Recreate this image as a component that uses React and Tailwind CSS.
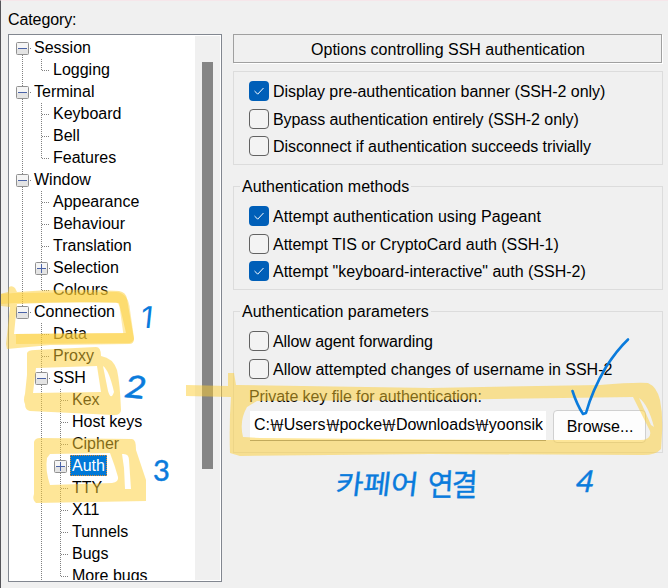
import React from "react";

// Each row lists its connector cells, then the label.
// v: line through, t: tee, l: elbow, s: blank
// a capital cell holds an expander: M minus, P plus
const rows = [
  ["A", "Session"],
  ["vl", "Logging"],
  ["M", "Terminal"],
  ["vt", "Keyboard"],
  ["vt", "Bell"],
  ["vl", "Features"],
  ["M", "Window"],
  ["vt", "Appearance"],
  ["vt", "Behaviour"],
  ["vt", "Translation"],
  ["vP", "Selection"],
  ["vl", "Colours"],
  ["Z", "Connection"],
  ["st", "Data"],
  ["st", "Proxy"],
  ["sM", "SSH"],
  ["svt", "Kex"],
  ["svt", "Host keys"],
  ["svt", "Cipher"],
  ["svP", "Auth"],
  ["svt", "TTY"],
  ["svt", "X11"],
  ["svt", "Tunnels"],
  ["svt", "Bugs"],
  ["svl", "More bugs"],
];

function Cell({ kind }) {
  const boxed = "AMPZ".includes(kind);
  const up = "vtlMPZ".includes(kind);
  const down = "vtMPA".includes(kind);
  return (
    <svg width="19" height="22" className="block shrink-0" shapeRendering="crispEdges">
      <g stroke="#808080" strokeDasharray="1 1">
        {up && <path d="M9.5 0V11" />}
        {down && <path d="M9.5 12V22" />}
        {(kind === "t" || kind === "l") && <path d="M10 11.5H18" />}
        {boxed && <path d="M17 11.5H19" />}
      </g>
      {boxed && (
        <g shapeRendering="auto">
          <rect x="3.5" y="5.5" width="12" height="12" rx="1" fill="#f5f5f5" stroke="#919191" />
          <rect x="4" y="12" width="11" height="5" fill="#e4e4e4" />
          <path d="M5 11.5H14" stroke="#4b63a7" />
          {kind === "P" && <path d="M9.5 7V16" stroke="#4b63a7" />}
        </g>
      )}
    </svg>
  );
}

function Row({ cells, label }) {
  return (
    <div className="flex h-[22px] shrink-0">
      {cells.split("").map((k, i) => (
        <Cell key={i} kind={k} />
      ))}
      {label === "Auth" ? (
        <span className="h-[21px] border border-dotted border-[#e08a30] bg-[#0078d7] px-px leading-[19px] text-white">
          {label}
        </span>
      ) : (
        <span className="ml-[2px] h-[22px] leading-[21px]">{label}</span>
      )}
    </div>
  );
}

function Check({ on, children, className = "" }) {
  return (
    <div className={"flex h-5 items-center " + className}>
      {on ? (
        <span className="flex size-5 shrink-0 items-center justify-center rounded-[4px] bg-[#005fb8]">
          <svg width="12" height="10" fill="none" stroke="#fff" strokeWidth="1">
            <path d="M1.5 5L4.7 8.2L10.5 2" />
          </svg>
        </span>
      ) : (
        <span className="size-5 shrink-0 rounded-[4px] border border-[#626262] bg-[#f3f3f3]" />
      )}
      <span className="mt-0.5 ml-1 leading-5">{children}</span>
    </div>
  );
}

function Group({ title, className, children }) {
  return (
    <section className={"w-[430px] border border-[#dcdcdc] pl-[15px] " + className}>
      {title && (
        <h2 className="-mt-[10px] -ml-[9px] h-5 w-fit bg-[#f0f0f0] px-[2px] leading-5">{title}</h2>
      )}
      {children}
    </section>
  );
}

const Won = () => (
  <span className="inline-block w-[13.8px] text-center">
    <span className="inline-block scale-x-170 scale-y-120 font-['Noto_Sans_CJK_KR','Noto_Sans',sans-serif] text-[14px] leading-none font-light">
      ₩
    </span>
  </span>
);

function Ink() {
  return (
    <div className="pointer-events-none absolute inset-0 text-[#0a7bdc]">
      <svg width="668" height="588" className="block">
        <g fill="#fdcd31" fillOpacity="0.5" fillRule="evenodd">
          <path d="M0 294L8 292L9 287Q12 285 15 288L17 292Q65 288 119 291Q126 292 127 299L134 339Q134 344 129 344L50 345L7 349L6 344L10 307L0 306ZM17 304Q70 301 119 303L123 320L126 333L14 334Z" />
          <path d="M27 353Q28 350 35 350L96 347Q101 347 101 356Q113 358 117 370Q120 383 121 410Q121 415 114 415L30 411Q25 410 25 404Q23 400 25 394L27 375ZM36 368L97 366L101 392L33 393ZM103 366Q109 370 114 392Q111 401 108 391Z" />
          <path d="M34 442Q35 438 40 438L132 439Q136 439 136 450L146 480V501L36 503Q32 500 34 494ZM50 454L110 453Q115 466 118 477Q119 482 112 483L50 485Q45 470 47 458ZM122 454Q129 453 129 460L131 489L125 489L124 468Z" />
          <path d="M186 385L228 386V373H234L236 385L430 388L600 385Q636 382 648 383Q657 387 660 400Q663 415 662 433L661 449Q656 455 643 455L430 454L240 456L230 453Q229 424 231 397L186 396ZM257 401L430 400L633 397L650 431Q652 440 640 440L500 440L260 438L243 437Q239 421 247 407ZM639 398Q648 404 654 427L651 425Z" />
        </g>
        <path
          d="M0 299L15 298L116 297Q124 298 125 310L129 338L16 339"
          fill="none" stroke="#fdcd31" strokeOpacity="0.4" strokeWidth="10" strokeLinejoin="round"
        />
        <path d="M572.5 391Q577 405 583 414L586 413Q592 391 606 367Q617 350 628 339.5" fill="none" stroke="#0a7bdc" strokeWidth="2.6" strokeLinecap="round" strokeLinejoin="round" />
      </svg>
      <span className="absolute top-[300px] left-[141px] -skew-x-6 font-[Inter,sans-serif] text-[30px] leading-[34px]">1</span>
      <span className="absolute top-[369px] left-[127px] rotate-6 -skew-x-6 scale-x-115 font-[Lato,sans-serif] text-[31px] leading-[34px] [-webkit-text-stroke:0.5px]">2</span>
      <span className="absolute top-[453px] left-[153px] font-[Lato,sans-serif] text-[29px] leading-[34px] [-webkit-text-stroke:0.5px]">3</span>
      <span className="absolute top-[463px] left-[577px] -skew-x-12 font-[Lato,sans-serif] text-[30px] leading-[34px] [-webkit-text-stroke:0.5px]">4</span>
      <span className="absolute top-[464px] left-[336px] -skew-x-6 scale-y-90 whitespace-nowrap font-['Noto_Sans_CJK_KR',sans-serif] text-[30px] leading-[36px] [-webkit-text-stroke:0.4px]">카페어</span>
      <span className="absolute top-[465px] left-[428px] -skew-x-3 scale-y-110 whitespace-nowrap font-['Noto_Sans_CJK_KR',sans-serif] text-[28px] leading-[36px] tracking-[-2px] [-webkit-text-stroke:0.4px]">연결</span>
    </div>
  );
}

export default function App() {
  return (
    <div className="relative h-[588px] w-[668px] overflow-hidden border-t border-l border-t-[#f6e6ea] border-l-[#55555a] bg-[#f0f0f0] font-['Liberation_Sans',Arial,sans-serif] text-[16px] whitespace-nowrap text-black">
      <div className="flex pl-[7px]">
        <div className="w-[214px] pt-2">
          <div className="h-[25px] leading-[21px] tracking-[-0.1px]">Category:</div>
          <div className="flex h-[548px] w-[214px] justify-between overflow-hidden border border-[#828790] bg-white pt-[2px] pr-px pl-1">
            <div className="flex h-[543px] w-[180px] flex-col overflow-hidden">
              {rows.map(([cells, label]) => (
                <Row key={label} cells={cells} label={label} />
              ))}
            </div>
            <div className="-mt-px h-[544px] w-[25px] bg-[#f0f0f0] pt-[26px] pl-[7px]">
              <div className="h-[407px] w-[11px] bg-[#858585]" />
            </div>
          </div>
        </div>
        <div className="ml-[11px] pt-[33px]">
          <div className="h-[29px] w-[429px] border border-[#a0a0a0] pl-px text-center leading-[29px] shadow-[1px_1px_0_#fff]">
            Options controlling SSH authentication
          </div>
          <Group className="mt-2 h-[94px] pt-[9px] tracking-[-0.068px]">
            <Check on>Display pre-authentication banner (SSH-2 only)</Check>
            <Check className="mt-2">Bypass authentication entirely (SSH-2 only)</Check>
            <Check className="mt-[7px]">Disconnect if authentication succeeds trivially</Check>
          </Group>
          <Group title="Authentication methods" className="mt-[21px] h-[104px]">
            <Check on className="mt-[9px] tracking-[0.055px]">Attempt authentication using Pageant</Check>
            <Check className="mt-2 tracking-[-0.03px]">Attempt TIS or CryptoCard auth (SSH-1)</Check>
            <Check on className="mt-[7px]">Attempt "keyboard-interactive" auth (SSH-2)</Check>
          </Group>
          <Group title="Authentication parameters" className="mt-[21px] h-[142px]">
            <Check className="mt-[9px] tracking-[-0.09px]">Allow agent forwarding</Check>
            <Check className="mt-2 tracking-[-0.03px]">Allow attempted changes of username in SSH-2</Check>
            <div className="mt-[7px] h-5 leading-[22px] tracking-[-0.08px]">Private key file for authentication:</div>
            <div className="mt-[4px] flex">
              <div className="mt-px ml-px h-[30px] w-[296px] border-b border-[#868686] bg-white pl-1 leading-[27px]">
                <div className="w-[289px] overflow-hidden">
                  C:<Won />Users<Won />pocke<Won />Downloads<Won />yoonsik-
                </div>
              </div>
              <button className="ml-[7px] h-[33px] w-[93px] rounded-[4px] border border-[#d0d0d0] bg-[#fdfdfd] pl-px leading-[31px]">
                Browse...
              </button>
            </div>
          </Group>
        </div>
      </div>
      <div className="absolute -top-px -left-px">
        <Ink />
      </div>
    </div>
  );
}
